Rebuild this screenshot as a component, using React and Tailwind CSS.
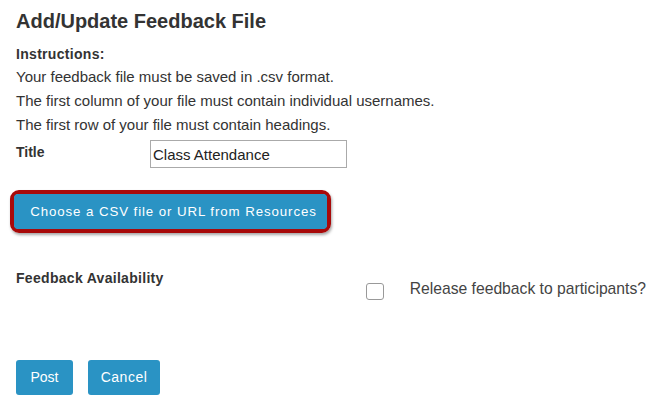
import React from 'react';

const App = () => {
  return (
    <div className="w-[662px] h-[408px] bg-white text-[#333] px-4 pt-[9px]" style={{ fontFamily: '"Liberation Sans", Arial, sans-serif' }}>
      <h1 className="text-[20px] font-bold leading-6">Add/Update Feedback File</h1>

      <div className="mt-[10px] text-[15px] leading-6">
        <div className="font-bold text-[14px] tracking-[0.3px] leading-[22px]">Instructions:</div>
        <div>Your feedback file must be saved in .csv format.</div>
        <div>The first column of your file must contain individual usernames.</div>
        <div>The first row of your file must contain headings.</div>
      </div>

      <div className="flex items-start mt-[3px]">
        <label className="w-[134px] text-[14px] font-bold pt-[2px] leading-5">Title</label>
        <input
          type="text"
          defaultValue="Class Attendance"
          className="w-[197px] h-[28px] border border-[#aaa] px-[2px] text-[15px] text-[#222] outline-none"
        />
      </div>

      <div className="mt-[22px] -ml-[6px] inline-block rounded-[9px] border-[4px] border-[#a80a0a] shadow-[1px_2px_3px_rgba(0,0,0,0.35)]">
        <button className="w-[313px] h-[35px] pl-[6px] bg-[#2a93c4] text-white text-[13.3px] tracking-[0.9px] rounded-[4px] whitespace-nowrap">
          Choose a CSV file or URL from Resources
        </button>
      </div>

      <div className="flex mt-[35px]">
        <div className="w-[350px] text-[14px] font-bold tracking-[0.3px] leading-5">Feedback Availability</div>
        <div className="flex items-start">
          <span className="w-[18px] h-[17px] border border-[#999] rounded-[3px] bg-white mt-[15px]"></span>
          <span className="ml-[26px] mt-[11px] text-[15.7px] leading-5 text-[#444] whitespace-nowrap">Release feedback to participants?</span>
        </div>
      </div>

      <div className="flex gap-[15px] mt-[60px]">
        <button className="w-[57px] h-[35px] bg-[#2a93c4] text-white text-[14px] rounded-[3px]">Post</button>
        <button className="w-[72px] h-[35px] bg-[#2a93c4] text-white text-[14px] tracking-[0.5px] rounded-[3px]">Cancel</button>
      </div>
    </div>
  );
};

export default App;
